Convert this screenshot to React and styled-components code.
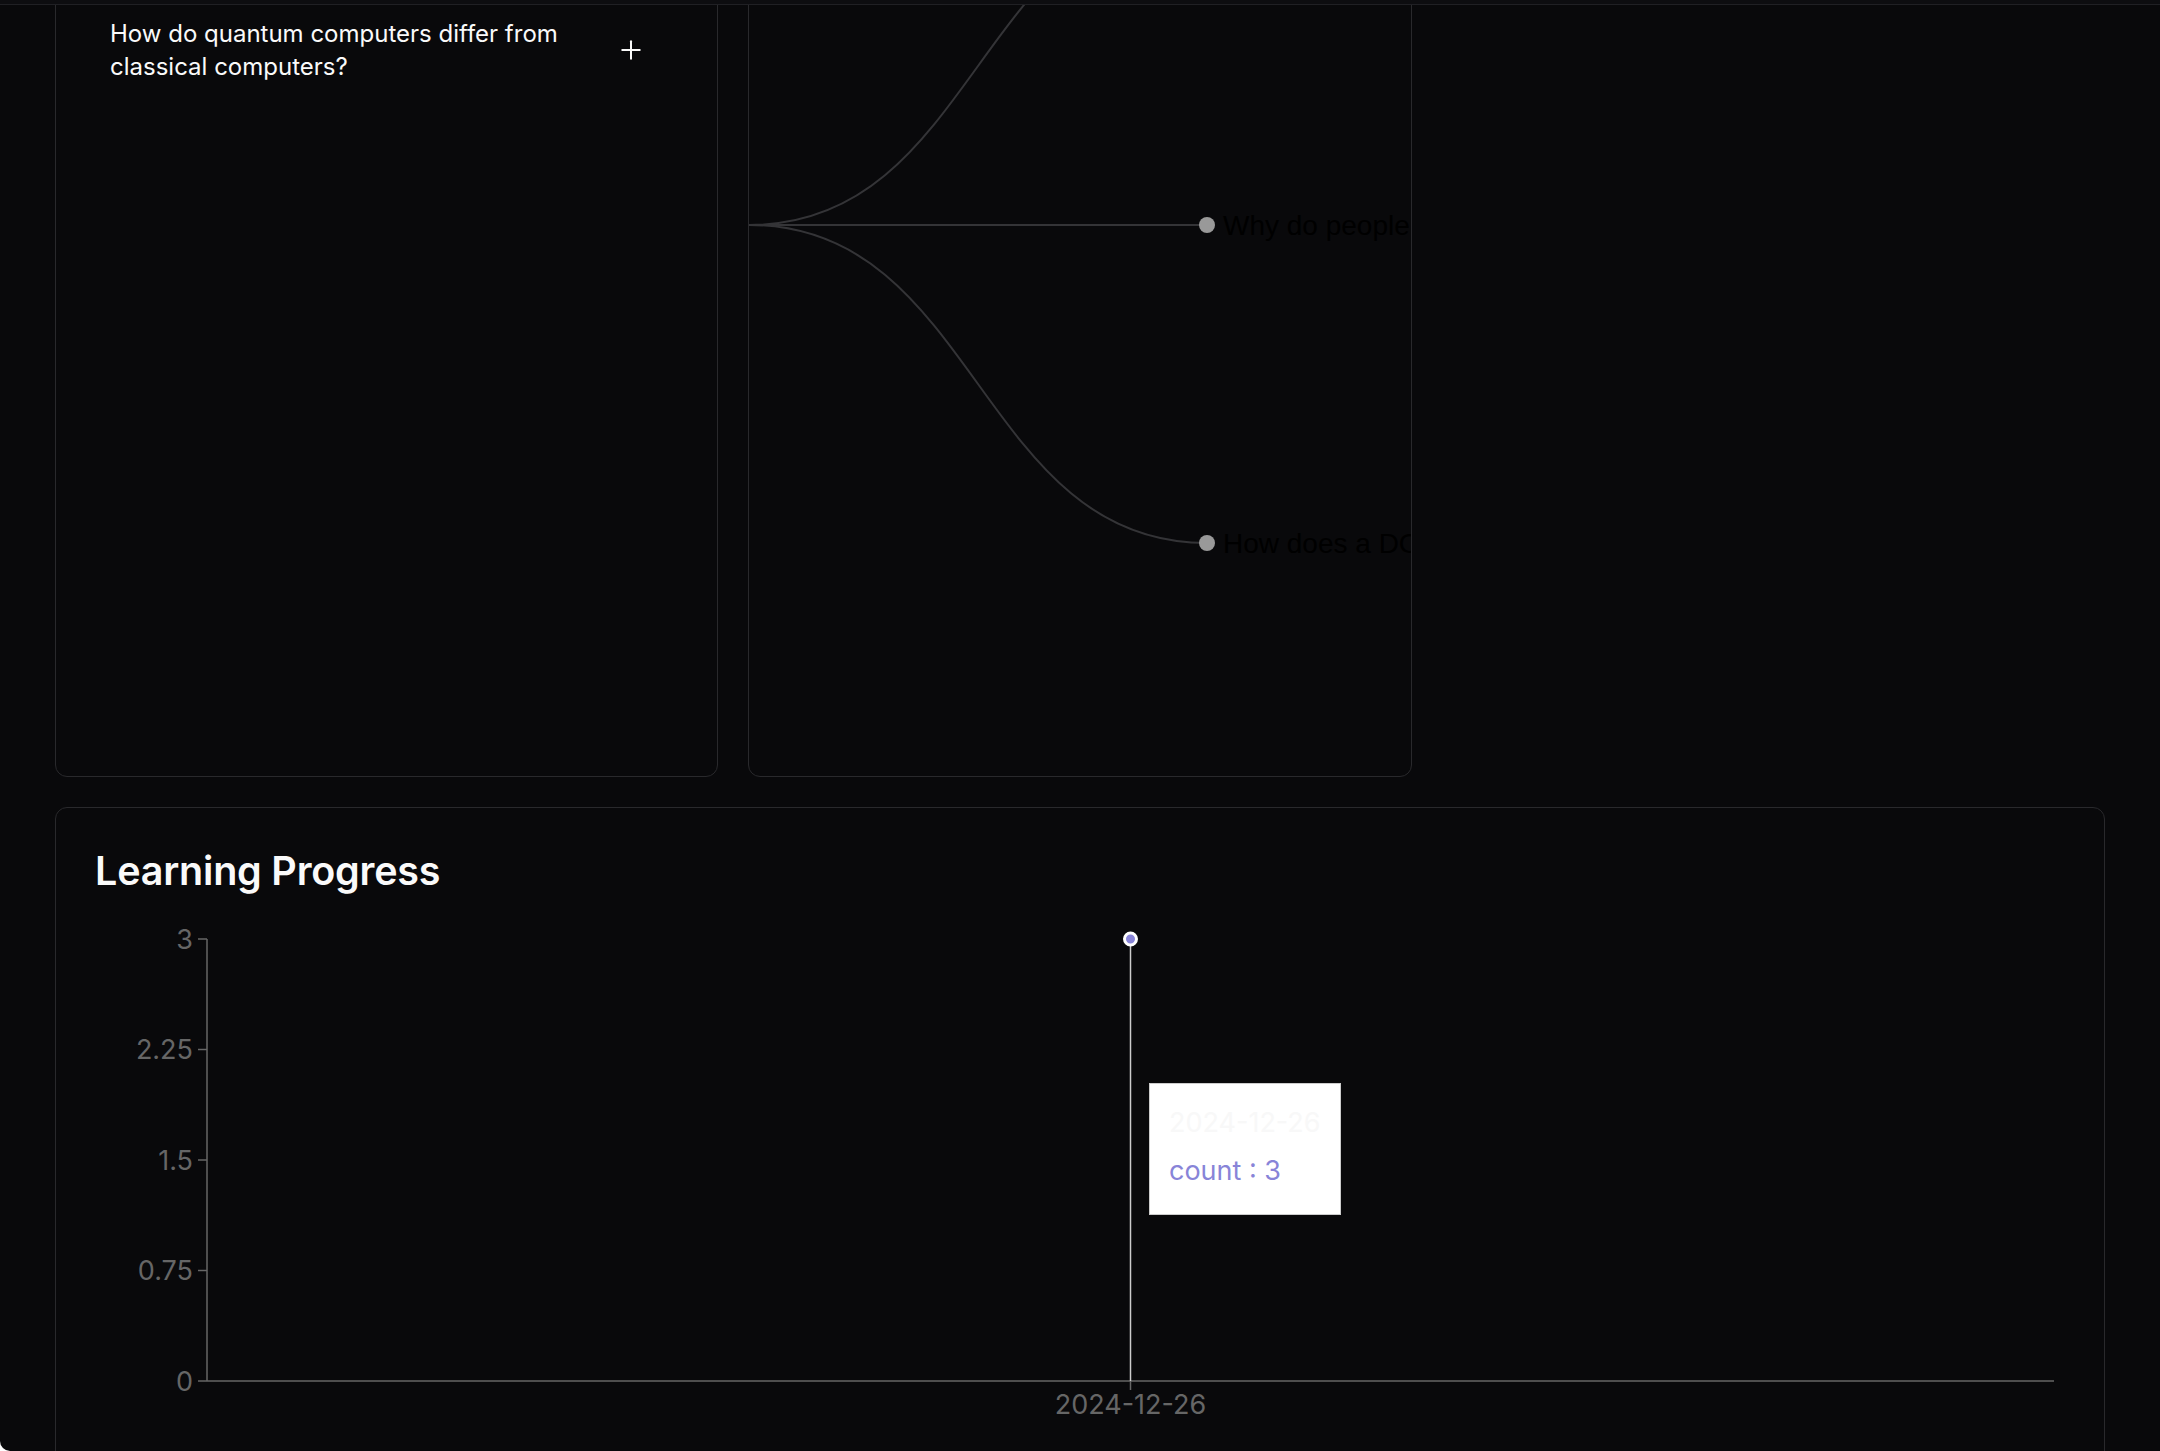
import React, { useLayoutEffect, useRef } from "react";
import styled, { createGlobalStyle } from "styled-components";
import { Plus } from "lucide-react";

const questions = [
  "What is a neural network?",
  "Why is the sky blue?",
  "How do quantum computers differ from classical computers?",
];

const treeChildren = [
  "What is quantum entanglement?",
  "Why do people dream at night?",
  "How does a DC motor work?",
];

const progress = [{ date: "2024-12-26", count: 3 }];
const yTicks = [0, 0.75, 1.5, 2.25, 3];

const ProgressChart = () => {
  const axisX = 115;
  const top = 25;
  const bottom = 467;
  const right = 1962;
  const maxY = 3;
  const yFor = (v) => bottom - (v / maxY) * (bottom - top);
  const pointX = (axisX + right) / 2;
  const point = progress[0];

  return (
    <ChartWrap>
      <svg width="1976" height="540">
        <line x1={axisX} y1={top} x2={axisX} y2={bottom} stroke="#666" strokeWidth="1.5" />
        {yTicks.map((v) => (
          <g key={v}>
            <line x1={axisX - 9} y1={yFor(v)} x2={axisX} y2={yFor(v)} stroke="#666" strokeWidth="1.5" />
            <AxisText x={axisX - 14} y={yFor(v)} textAnchor="end" dominantBaseline="central">
              {v}
            </AxisText>
          </g>
        ))}
        <line x1={axisX} y1={bottom} x2={right} y2={bottom} stroke="#666" strokeWidth="1.5" />
        <line x1={pointX} y1={bottom} x2={pointX} y2={bottom + 9} stroke="#666" strokeWidth="1.5" />
        <AxisText x={pointX} y={bottom + 23} textAnchor="middle" dominantBaseline="central">
          {point.date}
        </AxisText>
        <line x1={pointX} y1={top} x2={pointX} y2={bottom} stroke="#ccc" strokeWidth="1.5" />
        <circle cx={pointX} cy={yFor(point.count)} r="6" fill="#8884d8" stroke="#fff" strokeWidth="3" />
      </svg>
      <ChartTooltip>
        <TooltipLabel>{point.date}</TooltipLabel>
        <TooltipItem>count : {point.count}</TooltipItem>
      </ChartTooltip>
    </ChartWrap>
  );
};

const QuestionTree = () => {
  const rootY = 551;
  const childX = 458;
  const spacing = 318;

  return (
    <TreeSvg>
      {treeChildren.map((label, i) => {
        const y = rootY + (i - 1) * spacing;
        const mid = childX / 2;
        return (
          <path
            key={`l-${i}`}
            d={`M0,${rootY} C${mid},${rootY} ${mid},${y} ${childX},${y}`}
            fill="none"
            stroke="#343437"
            strokeWidth="2"
          />
        );
      })}
      {treeChildren.map((label, i) => {
        const y = rootY + (i - 1) * spacing;
        return (
          <g key={`n-${i}`}>
            <circle cx={childX} cy={y} r="8" fill="#999" />
            <NodeText x={childX + 16} y={y} dominantBaseline="central">
              {label}
            </NodeText>
          </g>
        );
      })}
    </TreeSvg>
  );
};

const App = () => {
  const mainRef = useRef(null);

  useLayoutEffect(() => {
    if (mainRef.current) mainRef.current.scrollTop = 368;
  }, []);

  return (
    <>
      <GlobalStyle />
      <Shell>
        <Header />
        <Main ref={mainRef}>
          <TopRow>
            <Card $pad>
              <CardTitle>Your Questions</CardTitle>
              <QuestionList>
                {questions.map((q) => (
                  <QuestionRow key={q}>
                    <QuestionText>{q}</QuestionText>
                    <AddButton aria-label="Add question">
                      <Plus size={30} strokeWidth={1.6} />
                    </AddButton>
                  </QuestionRow>
                ))}
              </QuestionList>
            </Card>
            <Card>
              <QuestionTree />
            </Card>
          </TopRow>
          <ProgressCard $pad>
            <CardTitle>Learning Progress</CardTitle>
            <ProgressChart />
          </ProgressCard>
        </Main>
      </Shell>
    </>
  );
};

const GlobalStyle = createGlobalStyle`
  html, body {
    margin: 0;
    padding: 0;
    background: #ffffff;
  }
  body {
    font-family: Inter, "Noto Sans", sans-serif;
  }
  * {
    box-sizing: border-box;
  }
`;

const Shell = styled.div`
  height: 100vh;
  display: flex;
  flex-direction: column;
  background: #09090b;
  overflow: hidden;
  border-bottom-left-radius: 10px;
`;

const Header = styled.header`
  flex: 0 0 5px;
  background: #0d0d10;
  border-bottom: 1px solid #202024;
`;

const Main = styled.main`
  flex: 1;
  overflow: hidden;
  padding: 36px 55px;
  display: flex;
  flex-direction: column;
  gap: 30px;
`;

const TopRow = styled.div`
  flex: 0 0 1104px;
  display: grid;
  grid-template-columns: repeat(3, 1fr);
  gap: 30px;
`;

const Card = styled.section`
  position: relative;
  background: #09090b;
  border: 1px solid #29292c;
  border-radius: 12px;
  overflow: hidden;
  padding: ${({ $pad }) => ($pad ? "36px" : "0")};
`;

const ProgressCard = styled(Card)`
  flex: 0 0 720px;
`;

const CardTitle = styled.h2`
  margin: 0;
  padding-left: 3px;
  font-size: 39.5px;
  line-height: 54px;
  font-weight: 600;
  color: #fafafa;
  letter-spacing: -0.2px;
`;

const QuestionList = styled.div`
  display: flex;
  flex-direction: column;
  gap: 12px;
  padding-top: 22px;
`;

const QuestionRow = styled.div`
  display: flex;
  align-items: center;
  justify-content: space-between;
  min-height: 96px;
  padding: 0 26px 0 18px;
`;

const QuestionText = styled.p`
  flex: 0 1 470px;
  margin: 0;
  font-size: 24px;
  line-height: 33px;
  color: #fafafa;
`;

const AddButton = styled.button`
  width: 48px;
  height: 48px;
  display: flex;
  align-items: center;
  justify-content: center;
  padding: 0;
  background: transparent;
  border: none;
  color: #fafafa;
  cursor: pointer;
`;

const TreeSvg = styled.svg`
  display: block;
  width: 100%;
  height: 100%;
`;

const NodeText = styled.text`
  font-family: "Liberation Sans", Arial, sans-serif;
  font-size: 28px;
  fill: #000;
`;

const ChartWrap = styled.div`
  position: relative;
  margin-top: 16px;
`;

const AxisText = styled.text`
  font-family: Inter, sans-serif;
  font-size: 27px;
  fill: #666;
`;

const ChartTooltip = styled.div`
  position: absolute;
  left: 1057px;
  top: 169px;
  background: #fff;
  border: 1px solid #ccc;
  padding: 19px 19px 17px;
  white-space: nowrap;
  font-size: 27px;
`;

const TooltipLabel = styled.p`
  margin: 0;
  line-height: 40px;
  color: #f8f8f8;
`;

const TooltipItem = styled.p`
  margin: 0;
  padding: 8px 0 6px;
  line-height: 40px;
  color: #8884d8;
`;

export default App;
